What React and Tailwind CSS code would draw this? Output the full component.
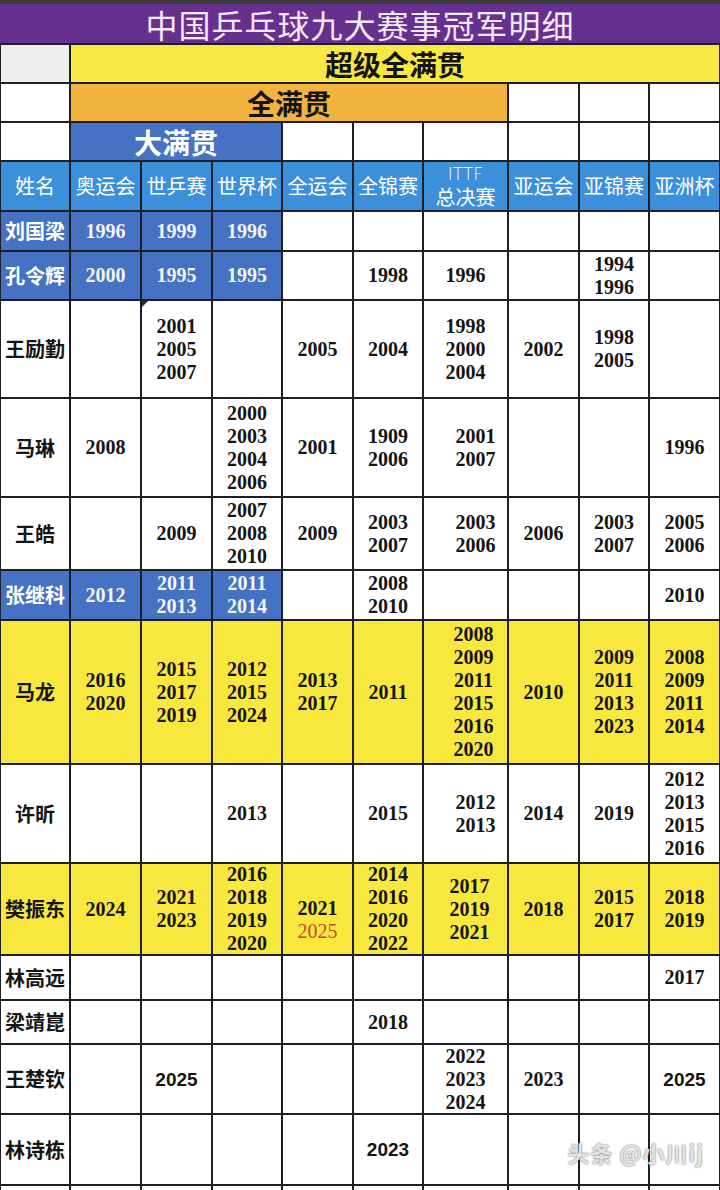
const serif = "font-['Liberation_Serif','Noto_Sans_CJK_SC',serif]";

const headers = ["姓名", "奥运会", "世乒赛", "世界杯", "全运会", "全锦赛", "ITTF", "亚运会", "亚锦赛", "亚洲杯"];

const rows = [
  { name: "刘国梁", tone: "blue", cells: ["1996", "1999", "1996", null, null, null, null, null, null] },
  { name: "孔令辉", tone: "blue", cells: ["2000", "1995", "1995", null, "1998", "1996", null, "1994 1996", null] },
  { name: "王励勤", cells: [null, { v: "2001 2005 2007", mark: true }, null, "2005", "2004", "1998 2000 2004", "2002", "1998 2005", null] },
  { name: "马琳", cells: ["2008", null, "2000 2003 2004 2006", "2001", "1909 2006", { v: "2001 2007", cls: "pl-[20px]" }, null, null, "1996"] },
  { name: "王皓", cells: [null, "2009", "2007 2008 2010", "2009", "2003 2007", { v: "2003 2006", cls: "pl-[20px]" }, "2006", "2003 2007", "2005 2006"] },
  { name: "张继科", tone: "blue", cells: ["2012", "2011 2013", "2011 2014", null, "2008 2010", null, null, null, "2010"] },
  { name: "马龙", tone: "yellow", cells: ["2016 2020", "2015 2017 2019", "2012 2015 2024", "2013 2017", "2011", { v: "2008 2009 2011 2015 2016 2020", cls: "pl-[16px]" }, "2010", "2009 2011 2013 2023", "2008 2009 2011 2014"] },
  { name: "许昕", cells: [null, null, "2013", null, "2015", { v: "2012 2013", cls: "pl-[20px]" }, "2014", "2019", "2012 2013 2015 2016"] },
  { name: "樊振东", tone: "yellow", cells: ["2024", "2021 2023", "2016 2018 2019 2020", { v: "2021 2025*", cls: "pt-[22px]" }, "2014 2016 2020 2022", { v: "2017 2019 2021", cls: "pl-[8px]" }, "2018", "2015 2017", "2018 2019"] },
  { name: "林高远", cells: [null, null, null, null, null, null, null, null, "2017"] },
  { name: "梁靖崑", cells: [null, null, null, null, "2018", null, null, null, null] },
  { name: "王楚钦", cells: [null, { v: "2025", sans: true }, null, null, null, "2022 2023 2024", "2023", null, { v: "2025", sans: true }] },
  { name: "林诗栋", cells: [null, null, null, null, { v: "2023", sans: true }, null, null, null, null] },
  { name: "", cells: [null, null, null, null, null, null, null, null, null] },
];

function Years({ value }) {
  return value.split(" ").map((y) =>
    y.endsWith("*") ? (
      <span key={y} className="block font-normal text-[#c8472b]">{y.slice(0, -1)}</span>
    ) : (
      <span key={y} className="block">{y}</span>
    )
  );
}

function DataCell({ cell, bg, text }) {
  const c = cell == null ? null : typeof cell === "string" ? { v: cell } : cell;
  const font = c && c.sans ? "font-['Liberation_Sans',sans-serif] text-[19px]" : `${serif} text-[20px]`;
  return (
    <div className={`relative flex flex-col items-center justify-center text-center font-bold leading-[23px] ${bg} ${text} ${font} ${c && c.cls ? c.cls : ""}`}>
      {c && c.mark && (
        <span className="absolute left-0 top-0 w-0 h-0 border-t-[6px] border-r-[6px] border-t-[#1c2a55] border-r-transparent" />
      )}
      {c && <Years value={c.v} />}
    </div>
  );
}

export default function App() {
  return (
    <div className="relative w-[720px] h-[1190px] overflow-hidden bg-white">
      <div className="h-[4px] bg-[#3b3b3b]" />
      <div className="h-[39px] bg-[#66308e] flex items-center justify-center text-[32px] leading-none tracking-[1px] text-[#f3e8f2] font-['Noto_Sans_CJK_SC',sans-serif]">
        中国乒乓球九大赛事冠军明细
      </div>

      <div className="grid grid-cols-[68px_69px_69px_68px_69px_68px_83px_69px_68px_69px] grid-rows-[37px_37px_37px_48px_38px_47px_96px_97px_71px_48px_142px_97px_90px_43px_42px_68px_69px_40px] gap-[2px] bg-[#1d1e26] px-[1px] pt-[2px] font-['Noto_Sans_CJK_SC',sans-serif]">
        <div className="bg-[#eeeeee]" />
        <div className="col-span-9 bg-[#f8e843] flex items-center justify-center text-[28px] font-bold text-[#141414]">超级全满贯</div>

        <div className="bg-white" />
        <div className="col-span-6 bg-[#f3b43f] flex items-center justify-center text-[28px] font-bold text-[#141414]">全满贯</div>
        <div className="bg-white" />
        <div className="bg-white" />
        <div className="bg-white" />

        <div className="bg-white" />
        <div className="col-span-3 bg-[#4572c3] flex items-center justify-center text-[28px] font-bold text-white">大满贯</div>
        <div className="bg-white" />
        <div className="bg-white" />
        <div className="bg-white" />
        <div className="bg-white" />
        <div className="bg-white" />
        <div className="bg-white" />

        {headers.map((h) =>
          h === "ITTF" ? (
            <div key={h} className="bg-[#3c8fdb] flex flex-col items-center justify-center text-white">
              <span className="text-[17px] leading-[22px] font-['DejaVu_Sans',sans-serif] font-light">ITTF</span>
              <span className="text-[20px] leading-[24px]">总决赛</span>
            </div>
          ) : (
            <div key={h} className="bg-[#3c8fdb] flex items-center justify-center text-[20px] text-white">{h}</div>
          )
        )}

        {rows.map((r, i) => {
          const nameBg = r.tone === "blue" ? "bg-[#4572c3]" : r.tone === "yellow" ? "bg-[#f8e83e]" : "bg-white";
          const nameText = r.tone === "blue" ? "text-white" : "text-[#151515]";
          return [
            <div key={`n${i}`} className={`flex items-center justify-center text-[20px] font-bold ${nameBg} ${nameText}`}>{r.name}</div>,
            ...r.cells.map((c, j) => {
              const blue = r.tone === "blue" && j < 3;
              const bg = blue ? "bg-[#4572c3]" : r.tone === "yellow" ? "bg-[#f8e83e]" : "bg-white";
              const text = blue ? "text-[#f4f4f4]" : "text-[#151515]";
              return <DataCell key={`c${i}-${j}`} cell={c} bg={bg} text={text} />;
            }),
          ];
        })}
      </div>

      <div className="absolute right-[16px] top-[1136px] text-[22px] font-bold tracking-[1px] text-[#e4e4e4] font-['Noto_Sans_CJK_SC',sans-serif] [text-shadow:0_0_2px_#555]">
        头条 @小川ij
      </div>
    </div>
  );
}
